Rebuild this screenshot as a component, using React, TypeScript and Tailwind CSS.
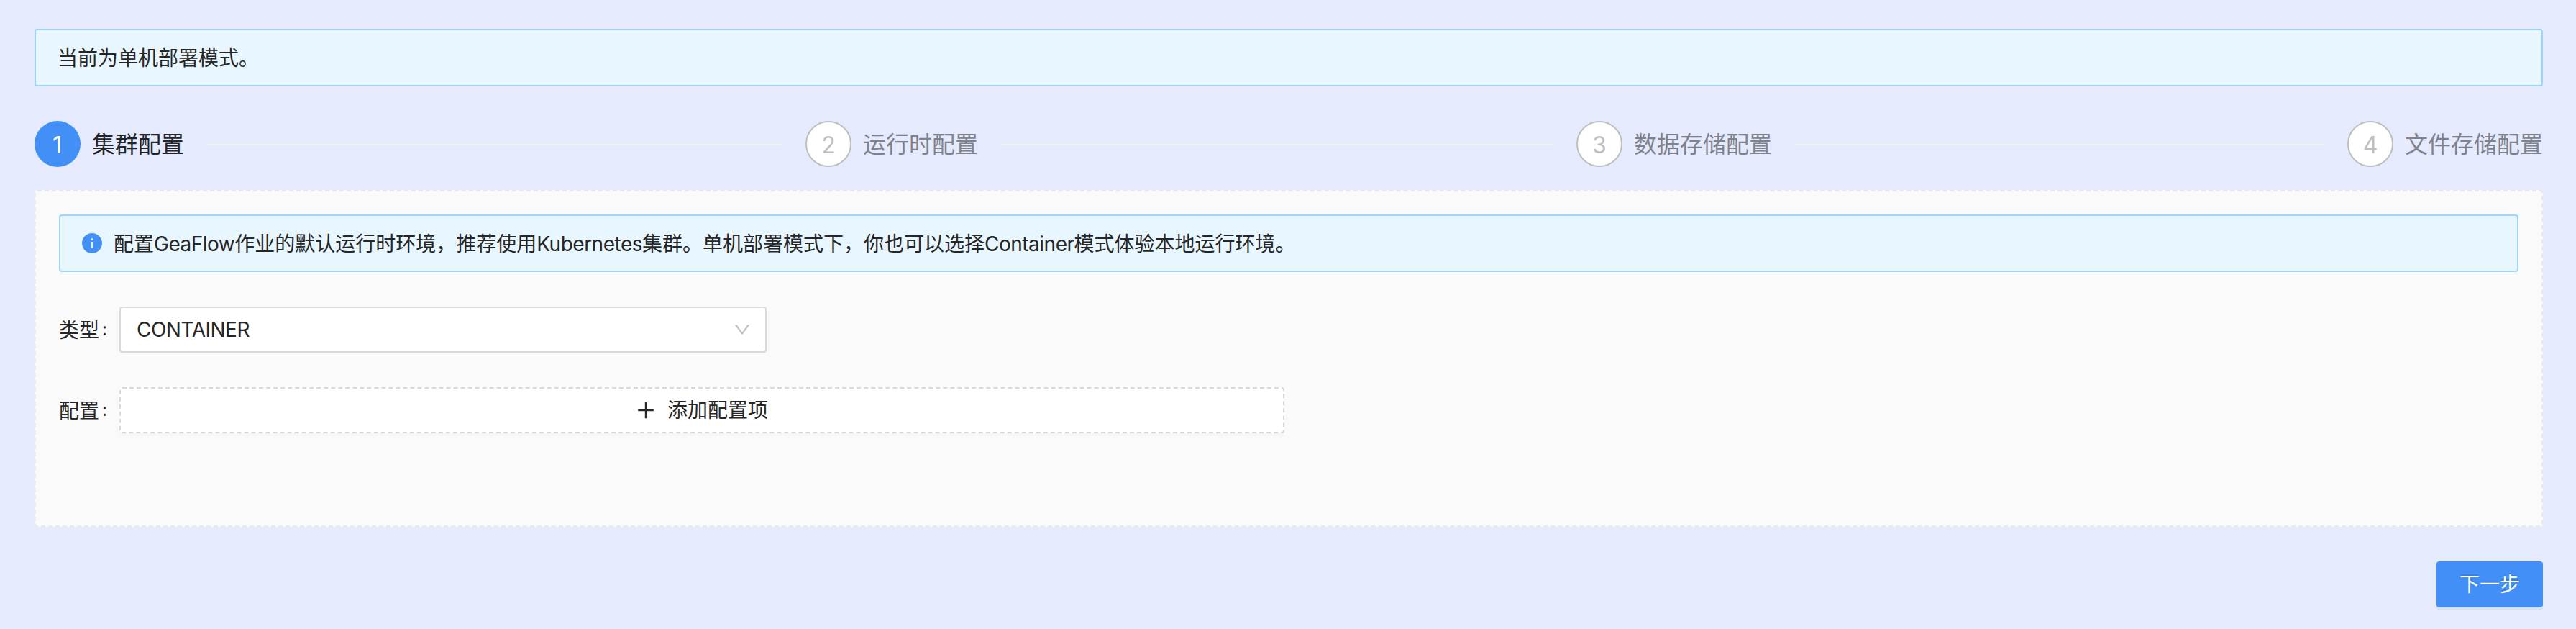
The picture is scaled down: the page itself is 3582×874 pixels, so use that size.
import { ReactNode } from "react";

const steps = ["集群配置", "运行时配置", "数据存储配置", "文件存储配置"];

function InfoIcon() {
  return (
    <svg viewBox="64 64 896 896" className="size-7 shrink-0 fill-[#4290f7]">
      <path d="M512 64C264.6 64 64 264.6 64 512s200.6 448 448 448 448-200.6 448-448S759.4 64 512 64zm32 664c0 4.4-3.6 8-8 8h-48c-4.4 0-8-3.6-8-8V456c0-4.4 3.6-8 8-8h48c4.4 0 8 3.6 8 8v272zm-32-344a48.01 48.01 0 0 1 0-96 48.01 48.01 0 0 1 0 96z" />
    </svg>
  );
}

function DownIcon() {
  return (
    <svg viewBox="64 64 896 896" className="size-6 fill-[#bfbfbf]">
      <path d="M884 256h-75c-5.1 0-9.9 2.5-12.9 6.6L512 654.2 227.9 262.6c-3-4.1-7.8-6.6-12.9-6.6h-75c-6.5 0-10.3 7.4-6.5 12.7l352.6 486.1c12.8 17.6 39 17.6 51.7 0l352.6-486.1c3.9-5.3.1-12.7-6.4-12.7z" />
    </svg>
  );
}

function PlusIcon() {
  return (
    <svg viewBox="64 64 896 896" className="size-7 fill-[#262626]">
      <path d="M482 152h60q8 0 8 8v704q0 8-8 8h-60q-8 0-8-8V160q0-8 8-8z" />
      <path d="M176 474h672q8 0 8 8v60q0 8-8 8H176q-8 0-8-8v-60q0-8 8-8z" />
    </svg>
  );
}

function Latin({ children }: { children: ReactNode }) {
  return <span className="tracking-[-0.5px]">{children}</span>;
}

function Alert({ icon, children }: { icon?: ReactNode; children: ReactNode }) {
  return (
    <div className="flex h-20 items-center gap-4 rounded-[4px] border-2 border-[#9ed4fc] bg-[#e8f6ff] px-[30px]">
      {icon}
      <span className="pt-px">{children}</span>
    </div>
  );
}

function Field({ label, children }: { label: string; children: ReactNode }) {
  return (
    <div className="flex h-16 items-center">
      <div className="flex w-[84px] items-center">
        <span className="pt-px">{label}</span>
        <span className="ml-1 text-[24px]">:</span>
      </div>
      {children}
    </div>
  );
}

export default function App() {
  return (
    <div className="h-[874px] w-full bg-[#e5eafd] px-[48px] pt-10 pr-[46px] font-['Inter','Noto_Sans_CJK_SC',sans-serif] text-[28px] leading-[44px] text-[#262626]">
      <Alert>当前为单机部署模式。</Alert>

      <div className="mt-12 flex h-16 gap-8">
        {steps.map((title, i) => {
          const active = i === 0;
          const last = i === steps.length - 1;
          return (
            <div key={title} className={last ? "flex items-center" : "flex flex-1 items-center"}>
              <div
                className={
                  active
                    ? "flex size-16 shrink-0 items-center justify-center rounded-full bg-[#4290f7] pt-[3px] pr-px text-[32px] text-white"
                    : "flex size-16 shrink-0 items-center justify-center rounded-full border-2 border-[#bfbfbf] bg-white pt-[3px] text-[32px] text-[#bfbfbf]"
                }
              >
                {i + 1}
              </div>
              <span
                className={
                  active
                    ? "ml-4 pt-0.5 text-[32px] whitespace-nowrap text-[#232428]"
                    : "ml-4 pt-0.5 text-[32px] whitespace-nowrap text-[#7f828c]"
                }
              >
                {title}
              </span>
              {!last && <div className="mt-0.5 ml-8 h-0.5 flex-1 bg-[#f0f0f0]" />}
            </div>
          );
        })}
      </div>

      <div className="mt-8 h-[468px] rounded-[4px] border-2 border-dashed border-[#e9e9e9] bg-[#fafafa] p-8">
        <Alert icon={<InfoIcon />}>
          配置<Latin>GeaFlow</Latin>作业的默认运行时环境，推荐使用<Latin>Kubernetes</Latin>
          集群。单机部署模式下，你也可以选择<Latin>Container</Latin>模式体验本地运行环境。
        </Alert>
        <div className="mt-12">
          <Field label="类型">
            <div className="flex h-16 w-[900px] items-center justify-between rounded-[4px] border-2 border-[#d9d9d9] bg-white pr-5 pl-[22px]">
              <Latin>CONTAINER</Latin>
              <DownIcon />
            </div>
          </Field>
        </div>
        <div className="mt-12">
          <Field label="配置">
            <button className="flex h-16 w-[1620px] items-center justify-center gap-4 rounded-[4px] border-2 border-dashed border-[#d9d9d9] bg-white shadow-[0_4px_0_rgba(0,0,0,0.016)]">
              <PlusIcon />
              <span>添加配置项</span>
            </button>
          </Field>
        </div>
      </div>

      <div className="mt-12 flex justify-end">
        <button className="h-16 w-[148px] rounded-[4px] bg-[#4290f7] text-white shadow-[0_4px_0_rgba(0,0,0,0.045)] [text-shadow:0_-2px_0_rgba(0,0,0,0.12)]">
          下一步
        </button>
      </div>
    </div>
  );
}
